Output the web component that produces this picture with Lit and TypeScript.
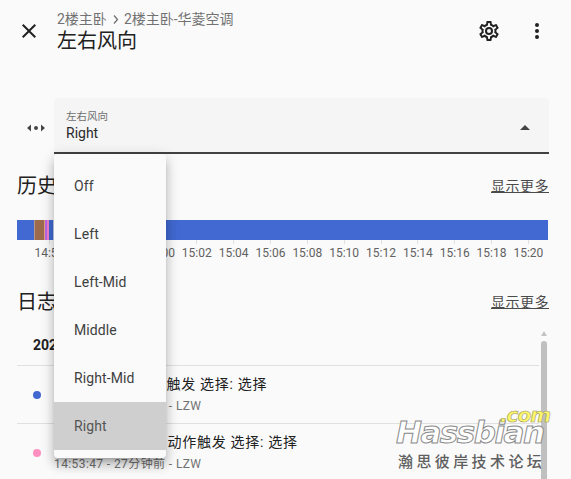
import { LitElement, html, css, svg } from "lit";
import { customElement } from "lit/decorators.js";

const CLOSE = "M19,6.41L17.59,5L12,10.59L6.41,5L5,6.41L10.59,12L5,17.59L6.41,19L12,13.41L17.59,19L19,17.59L13.41,12L19,6.41Z";
const COG = "M12,8A4,4 0 0,1 16,12A4,4 0 0,1 12,16A4,4 0 0,1 8,12A4,4 0 0,1 12,8M12,10A2,2 0 0,0 10,12A2,2 0 0,0 12,14A2,2 0 0,0 14,12A2,2 0 0,0 12,10M10,22C9.75,22 9.54,21.82 9.5,21.58L9.13,18.93C8.5,18.68 7.96,18.34 7.44,17.94L4.95,18.95C4.73,19.03 4.46,18.95 4.34,18.73L2.34,15.27C2.21,15.05 2.27,14.78 2.46,14.63L4.57,12.97L4.5,12L4.57,11L2.46,9.37C2.27,9.22 2.21,8.95 2.34,8.73L4.34,5.27C4.46,5.05 4.73,4.96 4.95,5.05L7.44,6.05C7.96,5.66 8.5,5.32 9.13,5.07L9.5,2.42C9.54,2.18 9.75,2 10,2H14C14.25,2 14.46,2.18 14.5,2.42L14.87,5.07C15.5,5.32 16.04,5.66 16.56,6.05L19.05,5.05C19.27,4.96 19.54,5.05 19.66,5.27L21.66,8.73C21.79,8.95 21.73,9.22 21.54,9.37L19.43,11L19.5,12L19.43,13L21.54,14.63C21.73,14.78 21.79,15.05 21.66,15.27L19.66,18.73C19.54,18.95 19.27,19.04 19.05,18.95L16.56,17.95C16.04,18.34 15.5,18.68 14.87,18.93L14.5,21.58C14.46,21.82 14.25,22 14,22H10M11.25,4L10.88,6.61C9.68,6.86 8.62,7.5 7.85,8.39L5.44,7.35L4.69,8.65L6.8,10.2C6.4,11.37 6.4,12.64 6.8,13.8L4.68,15.36L5.43,16.66L7.86,15.62C8.63,16.5 9.68,17.14 10.87,17.38L11.24,20H12.76L13.13,17.39C14.32,17.14 15.37,16.5 16.14,15.62L18.57,16.66L19.32,15.36L17.2,13.81C17.6,12.64 17.6,11.37 17.2,10.2L19.31,8.65L18.56,7.35L16.15,8.39C15.38,7.5 14.32,6.86 13.12,6.62L12.75,4H11.25Z";
const DOTS = "M12,16A2,2 0 0,1 14,18A2,2 0 0,1 12,20A2,2 0 0,1 10,18A2,2 0 0,1 12,16M12,10A2,2 0 0,1 14,12A2,2 0 0,1 12,14A2,2 0 0,1 10,12A2,2 0 0,1 12,10M12,4A2,2 0 0,1 14,6A2,2 0 0,1 12,8A2,2 0 0,1 10,6A2,2 0 0,1 12,4Z";
const SWING = "M3,12L7,8.5V15.5ZM21,12L17,8.5V15.5ZM12,10A2,2 0 0,1 14,12A2,2 0 0,1 12,14A2,2 0 0,1 10,12A2,2 0 0,1 12,10Z";

const icon = (d: string) => html`<svg class="ic" viewBox="0 0 24 24">${svg`<path d=${d}></path>`}</svg>`;

const SEGMENTS: [number, string][] = [
  [17, "#4169d1"], [1, "#b49a8c"], [9, "#9c6b4e"], [1, "#e8a07c"], [2, "#b565e8"], [2, "#f080c8"],
  [4, "#4169d1"], [2, "#c6d3f2"], [493, "#4169d1"],
];
const TICKS = ["14:54", "14:56", "14:58", "15:00", "15:02", "15:04", "15:06", "15:08", "15:10", "15:12", "15:14", "15:16", "15:18", "15:20"];
const OPTIONS = ["Off", "Left", "Left-Mid", "Middle", "Right-Mid", "Right"];

@customElement("app-root")
export class AppRoot extends LitElement {
  static styles = css`
    :host {
      display: block;
      position: relative;
      width: 571px;
      height: 479px;
      overflow: hidden;
      background: #fafafa;
      color: #212121;
      font-family: Roboto, "Noto Sans CJK SC", sans-serif;
    }
    .ic { width: 24px; height: 24px; fill: currentColor; display: block; }
    .header { display: flex; align-items: center; height: 62px; padding: 0 10px 0 5px; }
    .btn { width: 48px; height: 48px; display: flex; align-items: center; justify-content: center; flex: none; }
    .titles { flex: 1; margin-left: 4px; margin-top: 1px; }
    .crumb { font-size: 14px; line-height: 16px; color: #727272; display: flex; align-items: center; }
    .chev { width: 17px; height: 16px; flex: none; fill: none; stroke: #727272; stroke-width: 1.3; }
    .title { font-size: 20px; line-height: 24px; margin-top: 2px; }
    .actions { display: flex; }

    .select-row { display: flex; margin: 36px 22px 0 24px; }
    .swing { width: 30px; flex: none; color: #44474a; padding-top: 18px; }
    .field {
      flex: 1;
      height: 42px;
      background: #f5f5f5;
      border-radius: 4px 4px 0 0;
      border-bottom: 2px solid #424242;
      position: relative;
      padding: 12px 12px 0 12px;
    }
    .field-label { font-size: 10.5px; line-height: 13px; color: #6f6f6f; }
    .field-value { font-size: 14px; line-height: 17px; margin-top: 2px; color: #2a2a2a; }
    .arrow {
      position: absolute;
      right: 19px;
      top: 27px;
      width: 0;
      height: 0;
      border-left: 5px solid transparent;
      border-right: 5px solid transparent;
      border-bottom: 5px solid #444;
    }

    .section-head {
      display: flex;
      justify-content: space-between;
      align-items: center;
      margin: 0 22px 0 17px;
      height: 28px;
    }
    .h { font-size: 20px; line-height: 28px; }
    .more { font-size: 14px; color: #4a4a4a; text-decoration: underline; letter-spacing: 0.5px; margin-bottom: 2px; }
    .history { margin-top: 18px; }

    .bar { display: flex; height: 20px; margin: 20px 0 0 17px; width: 531px; }
    .ticks { display: flex; margin-left: 31px; height: 20px; }
    .tick { width: 36.85px; flex: none; position: relative; font-size: 12px; line-height: 15px; color: #616161; text-align: center; height: 22px; }
    .tick::before { content: ""; display: block; width: 1px; height: 4px; background: #e0e0e0; margin: 0 auto 0; }
    .tick span { display: block; margin: 2px -8px 0; }

    .log { margin-top: 28px; }
    .logs { margin: 19px 32px 0 17px; }
    .date { font-size: 14px; font-weight: 700; line-height: 20px; padding-left: 16px; height: 30px; border-bottom: 1px solid #e0e0e0; color: #212121; }
    .entry { display: flex; height: 57px; border-bottom: 1px solid #e0e0e0; }
    .entry.last { border-bottom: none; }
    .dot { width: 8px; height: 8px; border-radius: 50%; margin: 25px 13px 0 16px; flex: none; }
    .entry-text { padding-top: 8px; white-space: nowrap; }
    .msg { font-size: 14px; line-height: 20px; letter-spacing: 0.7px; color: #212121; }
    .sub { font-size: 12px; line-height: 16px; margin-top: 4px; color: #727272; letter-spacing: 0.4px; }

    .scroll-up {
      position: absolute;
      left: 541px;
      top: 331px;
      width: 0;
      height: 0;
      border-left: 3px solid transparent;
      border-right: 3px solid transparent;
      border-bottom: 5px solid #c4c4c4;
    }
    .scroll-thumb {
      position: absolute;
      left: 541px;
      top: 341px;
      width: 6px;
      height: 140px;
      border-radius: 3px 3px 0 0;
      background: #c0c0c0;
    }

    .menu {
      position: absolute;
      left: 54px;
      top: 154px;
      width: 112px;
      padding: 8px 0;
      background: #fafafa;
      border-radius: 4px;
      box-shadow: 0 5px 5px -3px rgba(0,0,0,.2), 0 8px 10px 1px rgba(0,0,0,.14), 0 3px 14px 2px rgba(0,0,0,.12);
    }
    .opt { height: 48px; display: flex; align-items: center; padding-left: 20px; font-size: 14px; color: #3f3f3f; letter-spacing: 0.1px; }
    .opt.on { background: #cfcfcf; color: #555; }

    .mark { position: absolute; left: 396px; top: 416px; width: 150px; }
    .hass {
      font-family: "DejaVu Sans", sans-serif;
      font-weight: 700;
      font-style: italic;
      font-size: 31px;
      line-height: 32px;
      letter-spacing: -1.5px;
      color: #fff;
      -webkit-text-stroke: 1px #8a8a8a;
      white-space: nowrap;
    }
    .com {
      position: absolute;
      right: -4px;
      top: -11px;
      font-family: "DejaVu Sans", sans-serif;
      font-weight: 700;
      font-style: italic;
      font-size: 20px;
      line-height: 20px;
      letter-spacing: -1px;
      color: #fdf56a;
      -webkit-text-stroke: 0.6px #9a9a6a;
    }
    .cn { font-size: 15px; line-height: 20px; letter-spacing: 3.4px; color: #5f5f5f; margin: 4px 0 0 2px; white-space: nowrap; font-weight: 500; }
  `;

  render() {
    return html`
      <div class="header">
        <div class="btn">${icon(CLOSE)}</div>
        <div class="titles">
          <div class="crumb">2楼主卧<svg class="chev" viewBox="0 0 17 16">${svg`<path d="M7 4.5L10.5 8.5L7 12.5"></path>`}</svg>2楼主卧-华菱空调</div>
          <div class="title">左右风向</div>
        </div>
        <div class="actions">
          <div class="btn">${icon(COG)}</div>
          <div class="btn">${icon(DOTS)}</div>
        </div>
      </div>

      <div class="select-row">
        <div class="swing">${icon(SWING)}</div>
        <div class="field">
          <div class="field-label">左右风向</div>
          <div class="field-value">Right</div>
          <div class="arrow"></div>
        </div>
      </div>

      <div class="section-head history">
        <div class="h">历史</div>
        <div class="more">显示更多</div>
      </div>
      <div class="bar">
        ${SEGMENTS.map(([w, c]) => html`<div style="width:${w}px;background:${c}"></div>`)}
      </div>
      <div class="ticks">
        ${TICKS.map((t) => html`<div class="tick"><span>${t}</span></div>`)}
      </div>

      <div class="section-head log">
        <div class="h">日志</div>
        <div class="more">显示更多</div>
      </div>
      <div class="logs">
        <div class="date">2022年2月</div>
        <div class="entry">
          <div class="dot" style="background:#4169d1"></div>
          <div class="entry-text">
            <div class="msg">已更改为 Left, 由触发 选择: 选择</div>
            <div class="sub">14:53:47 - 27分钟前 - LZW</div>
          </div>
        </div>
        <div class="entry last">
          <div class="dot" style="background:#ff8fc0"></div>
          <div class="entry-text">
            <div class="msg">已改为 Middle 由动作触发 选择: 选择</div>
            <div class="sub">14:53:47 - 27分钟前 - LZW</div>
          </div>
        </div>
      </div>

      <div class="scroll-up"></div>
      <div class="scroll-thumb"></div>

      <div class="menu">
        ${OPTIONS.map((o) => html`<div class="opt ${o === "Right" ? "on" : ""}">${o}</div>`)}
      </div>

      <div class="mark">
        <div class="hass">Hassbian</div>
        <div class="com">.com</div>
        <div class="cn">瀚思彼岸技术论坛</div>
      </div>
    `;
  }
}
